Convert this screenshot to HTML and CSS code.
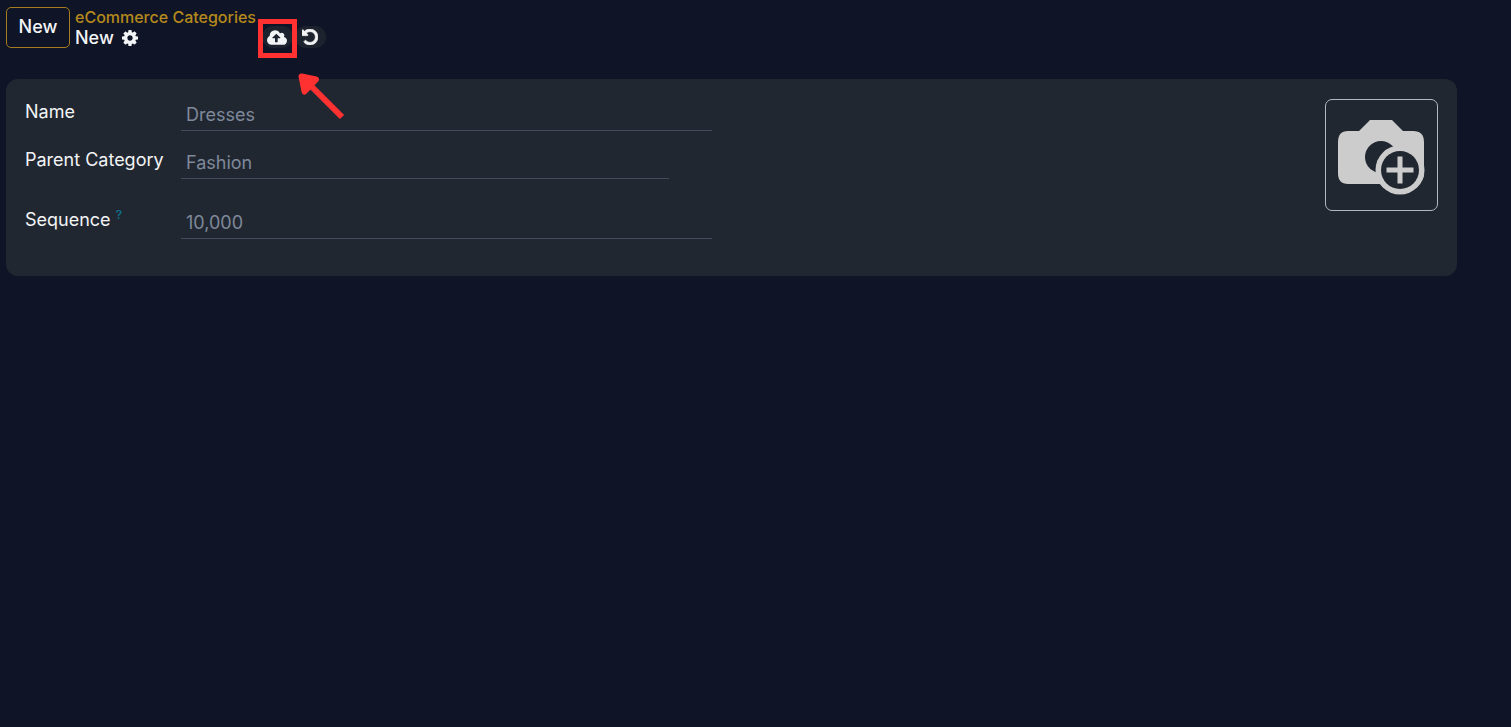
FILE: index.html
```html
<!DOCTYPE html>
<html lang="en">
<head>
<meta charset="utf-8">
<title>eCommerce Categories</title>
<link rel="stylesheet" href="styles.css">
</head>
<body>
<header class="control-panel">
  <button class="new-button" type="button">New</button>
  <nav class="breadcrumb">
    <a class="breadcrumb-link" href="#">eCommerce Categories</a>
    <div class="breadcrumb-current">
      <span>New</span>
      <button class="icon-button" type="button" aria-label="Actions">
        <svg class="icon-cog" viewBox="128 128 1536 1536"><path d="M1152 896q0-106-75-181t-181-75-181 75-75 181 75 181 181 75 181-75 75-181zm512-109v222q0 12-8 23t-20 13l-185 28q-19 54-39 91 35 50 107 138 10 12 10 25t-9 23q-27 37-99 108t-94 71q-12 0-26-9l-138-108q-44 23-91 38-16 136-29 186-7 28-36 28h-222q-14 0-24.500-8.500t-11.500-21.500l-28-184q-49-16-90-37l-141 107q-10 9-25 9-14 0-25-11-126-114-165-168-7-10-7-23 0-12 8-23 15-21 51-66.500t54-70.500q-27-50-41-99l-183-27q-13-2-21-12.500t-8-23.500v-222q0-12 8-23t19-13l186-28q14-46 39-92-40-57-107-138-10-12-10-24 0-10 9-23 26-36 98.500-107.500t94.500-71.500q13 0 26 10l138 107q44-23 91-38 16-136 29-186 7-28 36-28h222q14 0 24.500 8.500t11.500 21.500l28 184q49 16 90 37l142-107q9-9 24-9 13 0 25 10 129 119 165 170 7 8 7 22 0 12-8 23-15 21-51 66.500t-54 70.500q26 50 41 98l183 28q13 2 21 12.500t8 23.500z"/></svg>
      </button>
    </div>
  </nav>
  <div class="status-buttons">
    <button class="pill-button pill-save" type="button" aria-label="Save manually">
      <svg class="icon-cloud" viewBox="-64 128 1920 1408"><path fill-rule="evenodd" d="M1216 864q0-14-9-23l-352-352q-9-9-23-9t-23 9l-351 351q-10 12-10 24 0 14 9 23t23 9h224v352q0 13 9.500 22.500t22.500 9.500h192q13 0 22.500-9.500t9.500-22.500v-352h224q13 0 22.500-9.500t9.500-22.500zm640 288q0 159-112.500 271.500t-271.500 112.500h-1088q-185 0-316.500-131.500t-131.500-316.500q0-130 70-240t188-165q-2-30-2-43 0-212 150-362t362-150q156 0 285.500 87t188.500 231q71-62 166-62 106 0 181 75t75 181q0 76-41 138 130 31 213.500 135.500t83.500 238.500z"/></svg>
      <span class="highlight-box"></span>
      <svg class="highlight-arrow" viewBox="0 0 48 48"><path d="M44 44 11 11" stroke="#ff3131" stroke-width="6" fill="none"/><path d="M3.500 3.500 18 6.500 6.500 18.500z" fill="#ff3131" stroke="#ff3131" stroke-width="6" stroke-linejoin="round"/></svg>
    </button>
    <button class="pill-button" type="button" aria-label="Discard changes">
      <svg class="icon-undo" viewBox="128 128 1536 1536"><path d="M1664 896q0 156-61 298t-164 245-245 164-298 61q-172 0-327-72.500t-264-204.500q-7-10-6.500-22.500t8.500-20.500l137-138q10-9 25-9 16 2 23 12 73 95 179 147t225 52q104 0 198.500-40.500t163.500-109.500 109.500-163.500 40.500-198.500-40.500-198.500-109.500-163.500-163.500-109.500-198.500-40.500q-98 0-188 35.500t-160 101.500l137 138q31 30 14 69-17 40-59 40h-448q-26 0-45-19t-19-45v-448q0-42 40-59 39-17 69 14l130 129q107-101 244.500-156.500t284.500-55.500q156 0 298 61t245 164 164 245 61 298z"/></svg>
    </button>
  </div>
</header>
<main class="sheet">
  <form class="fields">
    <div class="field">
      <label class="field-label" for="name">Name</label>
      <input class="field-input" id="name" type="text" value="Dresses">
    </div>
    <div class="field">
      <label class="field-label" for="parent">Parent Category</label>
      <input class="field-input field-input-relation" id="parent" type="text" value="Fashion">
    </div>
    <div class="field field-spaced">
      <label class="field-label" for="sequence">Sequence <sup class="help">?</sup></label>
      <input class="field-input" id="sequence" type="text" value="10,000">
    </div>
  </form>
  <button class="image-button" type="button" aria-label="Add image">
    <svg class="icon-camera" viewBox="0 0 88 76"><path fill="#cccccc" d="M11 12H22L33 1H55L66 12H76Q87 12 87 23V54Q87 65 76 65H11Q1 65 1 54V23Q1 12 11 12Z"/><circle cx="44" cy="38" r="16" fill="#212731"/><circle cx="63" cy="51" r="24.500" fill="#cccccc"/><circle cx="63" cy="51" r="19" fill="#212731"/><path d="M63 37.500V64.500M49.500 51H76.500" stroke="#cccccc" stroke-width="5"/></svg>
  </button>
</main>
</body>
</html>
```

FILE: styles.css
```css
* {
  box-sizing: border-box;
}

body {
  margin: 0;
  min-height: 100vh;
  background: #0f1526;
  color: #f3f4f6;
  font-family: Inter, "Liberation Sans", sans-serif;
  font-size: 18px;
  line-height: 20px;
}

button,
input {
  font: inherit;
  color: inherit;
}

svg {
  display: block;
  fill: currentColor;
}

.control-panel {
  display: flex;
  align-items: flex-start;
  padding: 7px 6px 0;
}

.new-button {
  width: 64px;
  height: 41px;
  padding: 0 0 2px;
  border: 1px solid #a67c1e;
  border-radius: 5px;
  background: transparent;
  font-weight: 500;
}

.breadcrumb {
  margin-left: 5px;
}

.breadcrumb-link {
  display: block;
  margin-bottom: 1px;
  color: #b5891b;
  font-size: 16px;
  font-weight: 500;
  text-decoration: none;
}

.breadcrumb-current {
  display: flex;
  align-items: center;
  gap: 8px;
  font-weight: 500;
}

.icon-button {
  padding: 0;
  border: 0;
  background: transparent;
}

.icon-cog {
  width: 16px;
  height: 16px;
}

.status-buttons {
  display: flex;
  gap: 2px;
  margin: 19px 0 0 6px;
}

.pill-button {
  display: flex;
  align-items: center;
  justify-content: center;
  width: 31px;
  height: 22px;
  padding: 0;
  border: 0;
  border-radius: 11px;
  background: #1d232e;
}

.pill-save {
  position: relative;
}

.icon-cloud {
  width: 20px;
  height: 15px;
}

.icon-undo {
  width: 16px;
  height: 16px;
  stroke: currentColor;
  stroke-width: 60;
}

.highlight-box {
  position: absolute;
  top: -7px;
  left: -4px;
  width: 39px;
  height: 39px;
  border: 5px solid #ff3131;
}

.highlight-arrow {
  position: absolute;
  top: 47px;
  left: 36px;
  width: 48px;
  height: 48px;
}

.sheet {
  display: flex;
  align-items: flex-start;
  justify-content: space-between;
  gap: 20px;
  margin: 31px 54px 0 6px;
  padding: 20px 19px 37px;
  border-radius: 12px;
  background: #212731;
}

.fields {
  display: flex;
  flex: 0 1 687px;
  flex-direction: column;
  gap: 16px;
}

.field {
  display: grid;
  grid-template-columns: 156px 1fr;
}

.field-spaced {
  margin-top: 12px;
}

.field-label {
  padding-top: 3px;
}

.field-input {
  width: 100%;
  height: 32px;
  padding: 0 5px;
  border: 0;
  border-bottom: 1px solid #424b5c;
  border-radius: 0;
  outline: 0;
  background: transparent;
  color: #7f899a;
}

.field-input-relation {
  width: calc(100% - 43px);
}

.help {
  color: #0b7494;
  font-size: 12px;
  font-weight: 500;
  line-height: 0;
}

.image-button {
  display: flex;
  align-items: center;
  justify-content: center;
  width: 113px;
  height: 112px;
  padding: 4px 2px 0 0;
  border: 1px solid #b4b8be;
  border-radius: 7px;
  background: transparent;
}

.icon-camera {
  width: 88px;
  height: 76px;
}
```
